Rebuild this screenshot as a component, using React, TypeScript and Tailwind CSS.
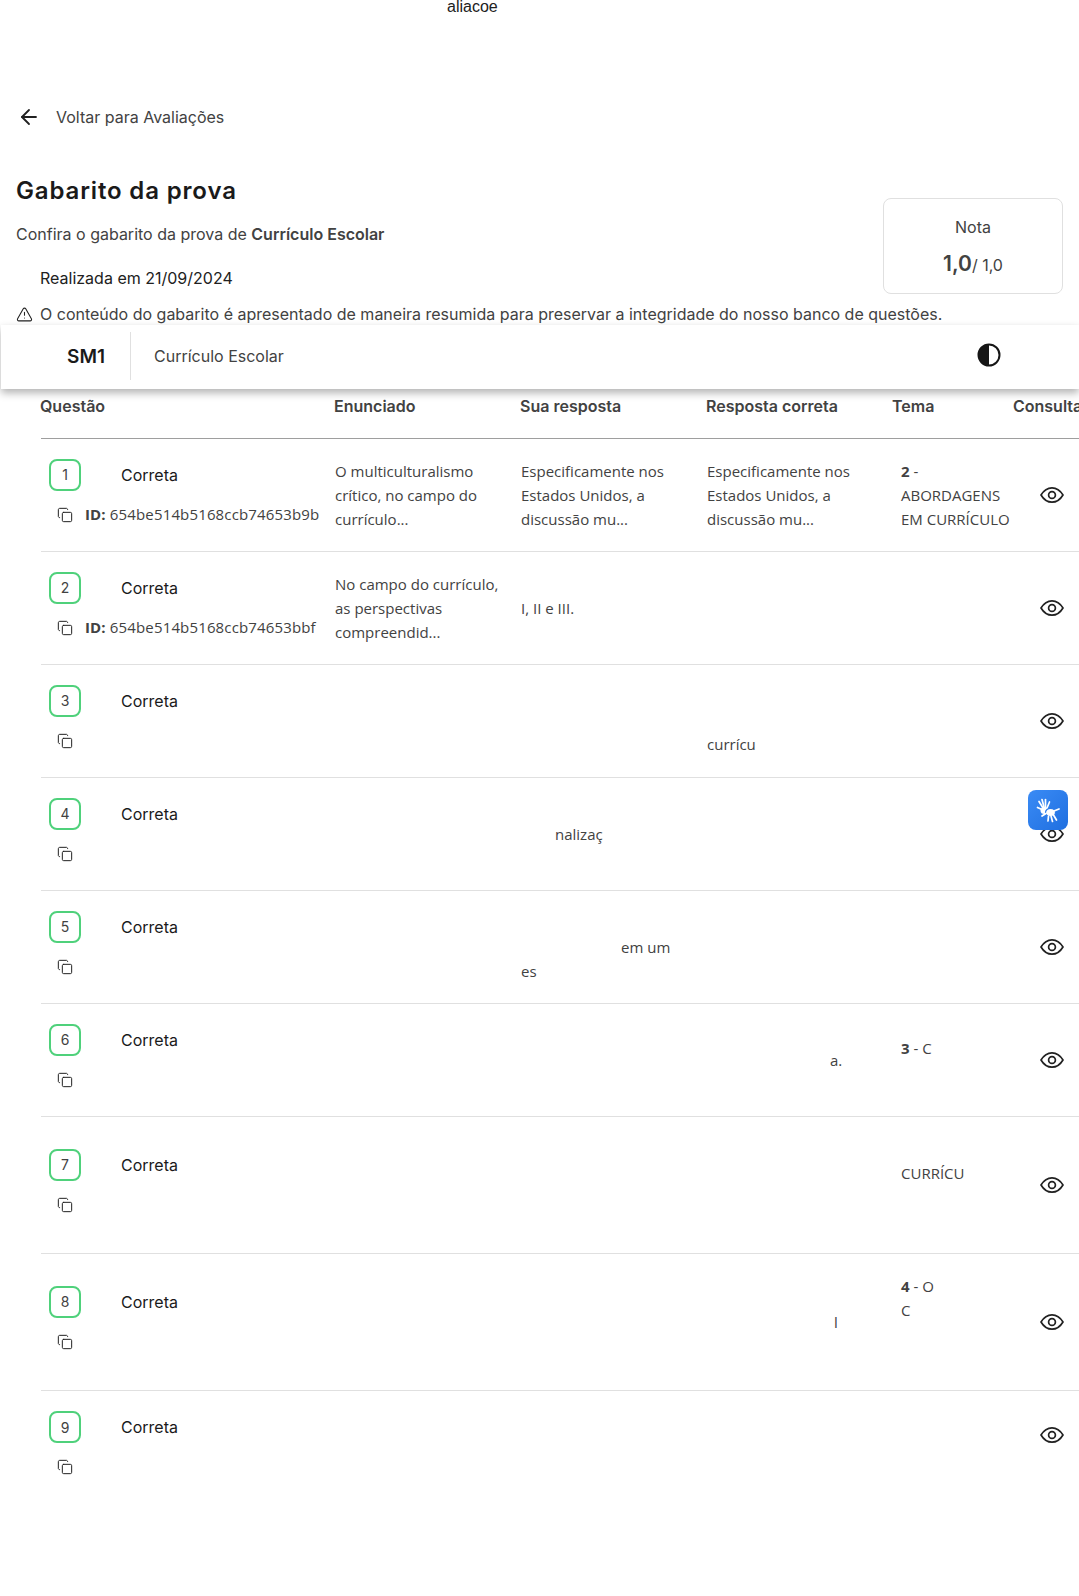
import React from "react";
import { ArrowLeft, Copy, TriangleAlert } from "lucide-react";

type Row = {
    n: number;
    height: string;
    id?: string;
    enunciado?: React.ReactNode;
    sua?: React.ReactNode;
    correta?: React.ReactNode;
    tema?: React.ReactNode;
    eyeClass?: string;
};

const rows: Row[] = [
    {
        n: 1,
        height: "h-[113px]",
        id: "654be514b5168ccb74653b9b",
        enunciado: <>O multiculturalismo<br />crítico, no campo do<br />currículo...</>,
        sua: <>Especificamente nos<br />Estados Unidos, a<br />discussão mu...</>,
        correta: <>Especificamente nos<br />Estados Unidos, a<br />discussão mu...</>,
        tema: <div className="pl-[8px]"><b>2</b> -<br />ABORDAGENS<br />EM CURRÍCULO</div>,
    },
    {
        n: 2,
        height: "h-[113px]",
        id: "654be514b5168ccb74653bbf",
        enunciado: <>No campo do currículo,<br />as perspectivas<br />compreendid...</>,
        sua: <>I, II e III.</>,
    },
    { n: 3, height: "h-[113px]", correta: <div className="pt-[46px]">currícu</div> },
    { n: 4, height: "h-[113px]", sua: <div className="pl-[34px]">nalizaç</div> },
    { n: 5, height: "h-[113px]", sua: <div className="pt-[24px] pl-[100px]">em um<br /><span className="-ml-[100px]">es</span></div> },
    {
        n: 6,
        height: "h-[113px]",
        correta: <div className="pl-[123px]">a.</div>,
        tema: <div className="pb-[24px] pl-[8px]"><b>3</b> - C</div>,
    },
    { n: 7, height: "h-[137px]", tema: <div className="pb-[24px] pl-[8px]">CURRÍCU</div> },
    {
        n: 8,
        height: "h-[137px]",
        correta: <div className="pl-[127px]">l</div>,
        tema: <div className="pb-[48px] pl-[8px]"><b>4</b> - O<br />C</div>,
    },
    { n: 9, height: "h-[113px]", eyeClass: "pb-[26px]" },
];

const Cell = ({ children }: { children?: React.ReactNode }) => (
    <div className="flex items-center pl-px font-['Open_Sans',sans-serif] text-[15px] leading-[24px] text-[#424242]">
        <div className="w-full">{children}</div>
    </div>
);

const EyeIcon = () => (
    <svg width="24" height="24" viewBox="0 0 24 24" fill="none" stroke="#212121" strokeWidth="1.7" strokeLinejoin="round">
        <path d="M1 12C4 7 8 4.8 12 4.8S20 7 23 12C20 17 16 19.2 12 19.2S4 17 1 12Z" />
        <circle cx="12" cy="12" r="3.4" />
    </svg>
);

const HandsIcon = () => (
    <svg width="26" height="26" viewBox="0 0 26 26" fill="none" stroke="#fff" strokeLinecap="round">
        <g strokeWidth="1.7">
            <path d="M8 11 4 4.5" />
            <path d="M9 10 7 2.5" />
            <path d="M10.5 10 10.5 2.5" />
            <path d="M12 11 14.5 5" />
            <path d="M8 13 2.5 10.5" />
        </g>
        <ellipse cx="9.5" cy="13.5" rx="4" ry="3.6" fill="#fff" stroke="none" />
        <ellipse cx="15.5" cy="15.5" rx="5" ry="4.2" fill="#fff" stroke="#2a7bea" strokeWidth="1.2" />
        <g strokeWidth="1.7">
            <path d="M19 14 24 12" />
            <path d="M18.5 18 21.5 23" />
            <path d="M16 19 17.5 24.5" />
            <path d="M13.5 19 13 24" />
            <path d="M11 16.5 7 19" />
        </g>
    </svg>
);

const ResultRow = ({ row, last }: { row: Row; last: boolean }) => (
    <div className={`grid grid-cols-[293px_186px_186px_186px_121px_100px] ${row.height} ${last ? "" : "border-b border-[#e0e0e0]"}`}>
        <div className="flex flex-col justify-center pb-[5px] pl-[8px]">
            <div className="flex items-center">
                <div className="flex h-[32px] w-[32px] items-center justify-center rounded-[8px] border-2 border-[#4fd17b] text-[14px] text-[#424242]">
                    {row.n}
                </div>
                <span className="ml-[40px] text-[16px] text-[#1a1a1a]">Correta</span>
            </div>
            <div className="mt-[12px] flex h-[24px] items-center pl-[8px]">
                <Copy size={16} strokeWidth={1.5} className="shrink-0 text-[#212121]" />
                {row.id && (
                    <span className="ml-[12px] whitespace-nowrap font-['Open_Sans',sans-serif] text-[15px] tracking-[0.15px] text-[#424242]">
                        <b>ID:</b> {row.id}
                    </span>
                )}
            </div>
        </div>
        <Cell>{row.enunciado}</Cell>
        <Cell>{row.sua}</Cell>
        <Cell>{row.correta}</Cell>
        <Cell>{row.tema}</Cell>
        <div className={`flex items-center pl-[27px] ${row.eyeClass ?? ""}`}>
            <EyeIcon />
        </div>
    </div>
);

export default function App() {
    return (
        <div className="relative h-[1596px] w-[1079px] overflow-hidden bg-white font-['Inter',sans-serif]">
            <div className="h-[14px] overflow-hidden pl-[447px] font-['Liberation_Sans',sans-serif] text-[16px] leading-[14px] text-[#212121]">
                aliacoe
            </div>

            <div className="mt-[89px] flex h-[28px] items-center pl-[17px]">
                <ArrowLeft size={24} strokeWidth={1.8} className="text-[#212121]" />
                <span className="ml-[15px] text-[16px] text-[#424242]">Voltar para Avaliações</span>
            </div>

            <div className="relative mt-[44px] pl-[16px]">
                <h1 className="text-[24px] leading-[32px] font-semibold tracking-[0.85px] text-[#1a1a1a]">Gabarito da prova</h1>
                <p className="mt-[15px] text-[16px] leading-[24px] text-[#424242]">
                    Confira o gabarito da prova de <b className="font-semibold">Currículo Escolar</b>
                </p>
                <p className="mt-[20px] pl-[24px] text-[16px] leading-[24px] text-[#212121]">Realizada em 21/09/2024</p>
                <div className="mt-[12px] flex h-[24px] items-center">
                    <TriangleAlert size={17} strokeWidth={1.5} className="text-[#212121]" />
                    <span className="ml-[7px] whitespace-nowrap text-[16px] text-[#424242]">
                        O conteúdo do gabarito é apresentado de maneira resumida para preservar a integridade do nosso banco de questões.
                    </span>
                </div>
                <div className="absolute top-[23px] left-[883px] flex h-[96px] w-[180px] flex-col items-center rounded-[8px] border border-[#e0e0e0] bg-white pt-[16px]">
                    <span className="text-[16px] leading-[24px] text-[#424242]">Nota</span>
                    <span className="mt-[11px] leading-[28px] text-[#424242]">
                        <b className="text-[21px] font-semibold">1,0</b>
                        <span className="text-[16px]">/ 1,0</span>
                    </span>
                </div>
            </div>

            <div className="relative z-10 mt-[-1px] ml-px flex h-[64px] w-[1078px] items-center bg-white pb-[2px] shadow-[0_4px_8px_rgba(0,0,0,0.3)]">
                <div className="flex h-[48px] w-[130px] items-center justify-end border-r border-[#e0e0e0] pt-[3px] pr-[25px] text-[19px] font-semibold text-[#1a1a1a]">
                    SM1
                </div>
                <span className="ml-[23px] text-[16px] text-[#424242]">Currículo Escolar</span>
                <svg className="absolute top-[18px] left-[976px]" width="24" height="24" viewBox="0 0 24 24">
                    <circle cx="12" cy="12" r="10.5" fill="#fff" stroke="#161616" strokeWidth="2" />
                    <path d="M12 1.5a10.5 10.5 0 0 0 0 21z" fill="#161616" />
                </svg>
            </div>

            <div className="ml-[41px] w-[1072px]">
                <div className="-ml-px grid h-[49px] grid-cols-[294px_186px_186px_186px_121px_100px] items-center pb-[15px] text-[16px] font-semibold whitespace-nowrap text-[#424242]">
                    <span>Questão</span>
                    <span>Enunciado</span>
                    <span>Sua resposta</span>
                    <span>Resposta correta</span>
                    <span>Tema</span>
                    <span>Consulta</span>
                </div>
                <div className="border-t border-[#9e9e9e]">
                    {rows.map((row, i) => (
                        <ResultRow key={row.n} row={row} last={i === rows.length - 1} />
                    ))}
                </div>
            </div>

            <div className="absolute top-[790px] left-[1028px] z-20 flex h-[40px] w-[40px] items-center justify-center rounded-[8px] bg-gradient-to-br from-[#3a8bf5] to-[#1f6fe0]">
                <HandsIcon />
            </div>
        </div>
    );
}
